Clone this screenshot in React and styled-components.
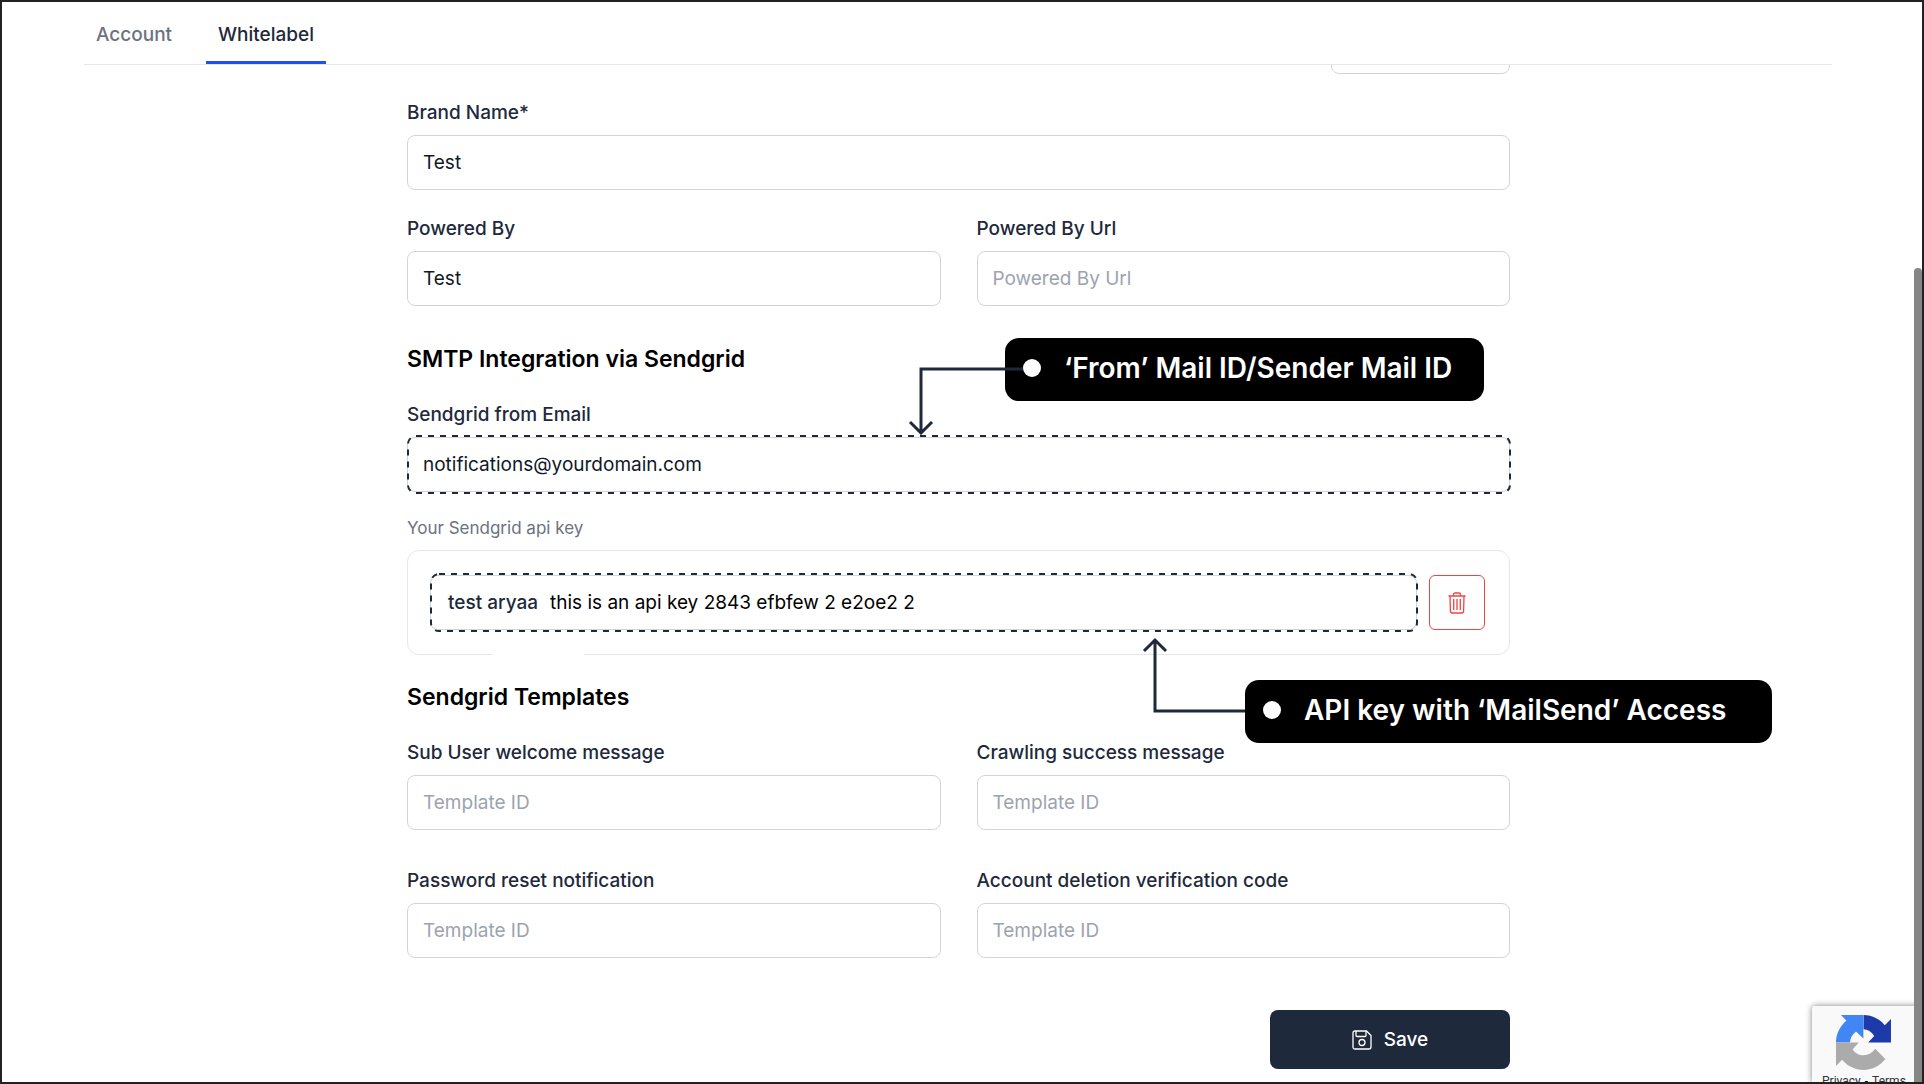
import React, { useId } from 'react'
import styled, { createGlobalStyle } from 'styled-components'

// -- -- --

const navy = '#1e293b'

const GlobalStyle = createGlobalStyle`
  * {
    box-sizing: border-box;
  }
  body {
    margin: 0;
    background: #fff;
    font-family: Inter, sans-serif;
  }
  input, button {
    font: inherit;
  }
`

const Page = styled.div`
  position: relative;
  height: 100vh;
  overflow: hidden;
  border: 2px solid #232223;
`
const Tabs = styled.nav`
  position: relative;
  z-index: 1;
  display: flex;
  gap: 22px;
  margin: 0 90px 0 82px;
  background: #fff;
  border-bottom: 1px solid #e5e7eb;
`
const Tab = styled.a`
  height: 62px;
  padding: 19px 12px 0;
  border-bottom: 3px solid ${({ $active }) => ($active ? '#1d4ff5' : 'transparent')};
  color: ${({ $active }) => ($active ? navy : '#6b7280')};
  font-size: 19px;
  font-weight: 500;
  line-height: 28px;
  text-decoration: none;
`
const Form = styled.form`
  display: flex;
  flex-direction: column;
  width: 58%;
  max-width: 1103px;
  margin-left: 405px;
`
const UploadButton = styled.button`
  align-self: flex-end;
  width: 179px;
  height: 54px;
  margin: -45px 0 24px;
  border: 1px solid #d1d5db;
  border-radius: 8px;
  background: #fff;
`
const Columns = styled.div`
  display: grid;
  grid-template-columns: 1fr 1fr;
  gap: 36px;
`
const Field = styled.div`
  display: flex;
  flex-direction: column;
  gap: 7px;
`
const Label = styled.label`
  color: ${({ $muted }) => ($muted ? '#6b7280' : navy)};
  font-size: ${({ $muted }) => ($muted ? 17 : 19)}px;
  font-weight: ${({ $muted }) => ($muted ? 400 : 500)};
  line-height: 30px;
`
const TextInput = styled.input`
  width: 100%;
  height: 55px;
  padding: 0 15px;
  border: 1px solid #d1d5db;
  border-radius: 8px;
  background: #fff;
  color: #111827;
  font-size: 19px;
  outline: none;

  &::placeholder {
    color: #9ca3af;
    opacity: 1;
  }
`
const Title = styled.h2`
  margin: 0;
  color: #000;
  font-size: 23px;
  font-weight: 600;
  line-height: 32px;
`
const Section = styled.section`
  display: flex;
  flex-direction: column;
  gap: 25px;
  margin-top: ${({ $top }) => $top}px;
`
const KeyCard = styled.div`
  position: relative;
  display: flex;
  gap: 12px;
  padding: 24px 24px 24px 22px;
  border: 1px solid #e5e7eb;
  border-radius: 12px;

  &::after {
    content: '';
    position: absolute;
    bottom: -1px;
    left: 85px;
    width: 91px;
    height: 1px;
    background: #fff;
  }
`
const KeyBox = styled.div`
  position: relative;
  flex: 1;
  display: flex;
  align-items: center;
  gap: 12px;
  padding: 0 18px;
  border-radius: 8px;
  box-shadow: inset 0 0 0 1px #d1d5db;
`
const KeyInput = styled.input`
  flex: 1;
  padding: 0;
  border: 0;
  background: none;
  color: #000;
  font-size: 19px;
  outline: none;
`
const DeleteButton = styled.button`
  display: flex;
  align-items: center;
  justify-content: center;
  width: 56px;
  height: 55px;
  padding: 0;
  border: 1px solid #ef4444;
  border-radius: 6px;
  background: #fff;
  color: #ef4444;
`
const SaveButton = styled.button`
  display: flex;
  align-items: center;
  justify-content: center;
  align-self: flex-end;
  gap: 12px;
  width: 240px;
  height: 59px;
  margin-top: 52px;
  border: 0;
  border-radius: 8px;
  background: ${navy};
  color: #fff;
  font-size: 19px;
  font-weight: 500;
`

// -- -- --
// annotations that lie over the form

const Anchor = styled.div`
  position: relative;
`
const Dashes = styled.svg`
  position: absolute;
  top: -2px;
  left: 0;
  width: calc(100% - 1px);
  height: 59px;
  overflow: visible;
  pointer-events: none;
`
const Callout = styled.div`
  position: absolute;
  z-index: 2;
  top: ${({ $top }) => $top}px;
  left: ${({ $left }) => $left}px;
  display: flex;
  align-items: center;
  gap: 23px;
  width: ${({ $width }) => $width}px;
  height: 63px;
  padding: 0 0 3px 18px;
  border-radius: 14px;
  background: #000;
  color: #fff;
  font-size: 28px;
  font-weight: 600;
  white-space: nowrap;
`
const Dot = styled.span`
  width: 18px;
  height: 18px;
  border-radius: 50%;
  background: #fff;
`
const Arrow = styled.svg`
  position: absolute;
  z-index: 3;
  top: ${({ $top }) => $top}px;
  left: ${({ $left }) => $left}px;
  fill: none;
  stroke: ${navy};
  stroke-width: 3px;
  pointer-events: none;
`

// -- -- --
// browser chrome at the window's edge

const ScrollThumb = styled.div`
  position: absolute;
  z-index: 4;
  top: 266px;
  right: 0;
  bottom: 0;
  width: 8px;
  border-radius: 4px 4px 0 0;
  background: #868686;
`
const Captcha = styled.aside`
  position: absolute;
  right: 0;
  bottom: 0;
  width: 110px;
  height: 76px;
  padding: 9px 0 0 24px;
  overflow: hidden;
  border-radius: 3px 0 0 0;
  background: #f9f9f9;
  box-shadow: 0 0 6px #808080;
`
const CaptchaLinks = styled.div`
  display: flex;
  gap: 4px;
  margin: 3px 0 0 -14px;
  font-family: Roboto, sans-serif;
  font-size: 12px;
  line-height: 16px;
  white-space: nowrap;

  a {
    color: #333;
    text-decoration: none;
  }
`

const TrashIcon = () => (
  <svg width="18" height="22" viewBox="0 0 18 22" fill="none" stroke="currentColor" strokeWidth="1.3">
    <path d="M0.5 4h17M5.5 4V2.6Q5.5 1 7 1h4q1.5 0 1.5 1.6V4M2 4l.4 15Q2.5 21 4.300 21h9.400Q15.500 21 15.600 19L16 4" />
    <path d="M5.700 7v11M9 7v11M12.300 7v11" />
  </svg>
)

const SaveIcon = () => (
  <svg width="20" height="20" viewBox="0 0 20 20" fill="none" stroke="currentColor" strokeWidth="1.3">
    <path d="M3 1h11.500L19 5.500V17q0 2-2 2H3q-2 0-2-2V3q0-2 2-2z" />
    <path d="M4 1v4.500q0 1 1 1h8q1 0 1-1V1" />
    <circle cx="10" cy="12.500" r="3" />
  </svg>
)

const CaptchaArt = styled.svg`
  display: block;
`
const CaptchaLogo = () => (
  <CaptchaArt width="55" height="55" viewBox="0 0 64 64">
    <path fill="#1c3aa9" d="M64 31.955l-.033-1.370V4.687l-7.160 7.160C50.948 4.674 42.033.093 32.050.093v16.500c5 .1 9 2.600 12.400 7.800L37.400 31.955z" />
    <path fill="#4285f4" d="M31.862.094l-1.370.033H5.800l6.300 6.300C4.580 13.147 0 22.060 0 32.046h16.300c.1-5 2.500-9.300 7-12.900l8.562 8.100z" />
    <path fill="#ababab" d="M.001 32.045v27.270l7.160-7.160C13.054 59.327 21.967 63.910 31.950 63.910c10.390 0 19.620-4.960 25.456-12.638L45.600 39.400c-3.300 5-8 7.400-13.500 7.400-5.300 0-9.900-2-12.700-7l7.200-7.755z" />
  </CaptchaArt>
)

const InputField = ({ label, ...props }) => {
  const id = useId()
  return (
    <Field>
      <Label htmlFor={id}>{label}</Label>
      <TextInput id={id} {...props} />
    </Field>
  )
}

const DashedFrame = () => (
  <Dashes aria-hidden="true">
    <rect x="1" y="1" width="100%" height="57" rx="8" fill="none" stroke={navy} strokeWidth="2" strokeDasharray="6 6" />
  </Dashes>
)

const templates = [
  'Sub User welcome message',
  'Crawling success message',
  'Password reset notification',
  'Account deletion verification code',
]

const Whitelabel = () => (
  <Form onSubmit={(e) => e.preventDefault()}>
    <UploadButton type="button" aria-label="Upload" />
    <InputField label="Brand Name*" defaultValue="Test" />
    <Section $top={24}>
      <Columns>
        <InputField label="Powered By" defaultValue="Test" />
        <InputField label="Powered By Url" placeholder="Powered By Url" />
      </Columns>
    </Section>

    <Section $top={37}>
      <Title>SMTP Integration via Sendgrid</Title>
      <Field>
        <Label htmlFor="from-email">Sendgrid from Email</Label>
        <Anchor>
          <TextInput id="from-email" defaultValue="notifications@yourdomain.com" />
          <DashedFrame />
          <Callout $top={-99} $left={598} $width={479}>
            <Dot />
            ‘From’ Mail ID/Sender Mail ID
          </Callout>
          <Arrow $top={-70} $left={501} width="116" height="68" aria-hidden="true">
            <path d="M115 2H13v63M2 55l11 11 11-11" />
          </Arrow>
        </Anchor>
      </Field>
    </Section>

    <Section $top={21}>
      <Field>
        <Label $muted htmlFor="api-key">
          Your Sendgrid api key
        </Label>
        <Anchor>
          <KeyCard>
            <KeyBox>
              <Label htmlFor="api-key">test aryaa</Label>
              <KeyInput id="api-key" defaultValue="this is an api key 2843 efbfew 2 e2oe2 2" />
              <DashedFrame />
            </KeyBox>
            <DeleteButton type="button" aria-label="Delete key">
              <TrashIcon />
            </DeleteButton>
          </KeyCard>
          <Callout $top={130} $left={838} $width={527}>
            <Dot />
            API key with ‘MailSend’ Access
          </Callout>
          <Arrow $top={87} $left={735} width="103" height="76" aria-hidden="true">
            <path d="M103 74H13V4M2 14L13 3l11 11" />
          </Arrow>
        </Anchor>
      </Field>
    </Section>

    <Section $top={26}>
      <Title>Sendgrid Templates</Title>
      <Columns>
        {templates.map((name) => (
          <InputField key={name} label={name} placeholder="Template ID" />
        ))}
      </Columns>
    </Section>

    <SaveButton type="submit">
      <SaveIcon />
      Save
    </SaveButton>
  </Form>
)

const App = () => (
  <>
    <GlobalStyle />
    <Page>
      <Tabs>
        <Tab href="#account">Account</Tab>
        <Tab href="#whitelabel" $active>
          Whitelabel
        </Tab>
      </Tabs>
      <Whitelabel />
      <Captcha>
        <CaptchaLogo />
        <CaptchaLinks>
          <a href="#privacy">Privacy</a>
          <span>-</span>
          <a href="#terms">Terms</a>
        </CaptchaLinks>
      </Captcha>
      <ScrollThumb />
    </Page>
  </>
)

export default App
